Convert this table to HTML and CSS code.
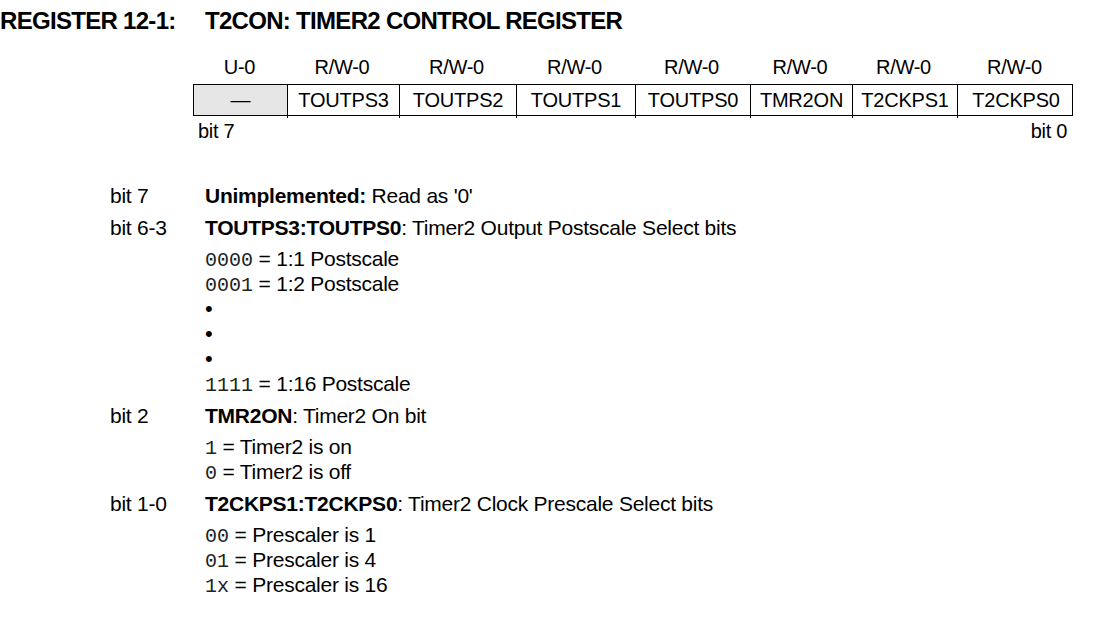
FILE: index.html
```html
<!DOCTYPE html>
<html>
<head>
<meta charset="utf-8">
<link rel="stylesheet" href="styles.css">
</head>
<body>
<div class="page">
  <h1 class="title"><span class="reg-num">REGISTER 12-1:</span><span class="reg-name">T2CON: TIMER2 CONTROL REGISTER</span></h1>

  <div class="register">
    <div class="reg-grid access">
      <div>U-0</div><div>R/W-0</div><div>R/W-0</div><div>R/W-0</div><div>R/W-0</div><div>R/W-0</div><div>R/W-0</div><div>R/W-0</div>
    </div>
    <div class="reg-grid bits">
      <div class="cell unimpl">—</div>
      <div class="cell">TOUTPS3</div>
      <div class="cell">TOUTPS2</div>
      <div class="cell">TOUTPS1</div>
      <div class="cell">TOUTPS0</div>
      <div class="cell">TMR2ON</div>
      <div class="cell">T2CKPS1</div>
      <div class="cell">T2CKPS0</div>
    </div>
    <div class="bitnums"><span>bit 7</span><span>bit 0</span></div>
  </div>

  <div class="desc">
    <div class="entry">
      <div class="label">bit 7</div>
      <div class="body">
        <div class="line"><b>Unimplemented:</b> Read as '0'</div>
      </div>
    </div>
    <div class="entry">
      <div class="label">bit 6-3</div>
      <div class="body">
        <div class="line"><b>TOUTPS3:TOUTPS0</b>: Timer2 Output Postscale Select bits</div>
        <div class="subs">
          <div class="line"><code>0000</code> = 1:1 Postscale</div>
          <div class="line"><code>0001</code> = 1:2 Postscale</div>
          <div class="line bullet">•</div>
          <div class="line bullet">•</div>
          <div class="line bullet">•</div>
          <div class="line"><code>1111</code> = 1:16 Postscale</div>
        </div>
      </div>
    </div>
    <div class="entry">
      <div class="label">bit 2</div>
      <div class="body">
        <div class="line"><b>TMR2ON</b>: Timer2 On bit</div>
        <div class="subs">
          <div class="line"><code>1</code> = Timer2 is on</div>
          <div class="line"><code>0</code> = Timer2 is off</div>
        </div>
      </div>
    </div>
    <div class="entry">
      <div class="label">bit 1-0</div>
      <div class="body">
        <div class="line"><b>T2CKPS1:T2CKPS0</b>: Timer2 Clock Prescale Select bits</div>
        <div class="subs">
          <div class="line"><code>00</code> = Prescaler is 1</div>
          <div class="line"><code>01</code> = Prescaler is 4</div>
          <div class="line"><code>1x</code> = Prescaler is 16</div>
        </div>
      </div>
    </div>
  </div>
</div>
</body>
</html>
```
FILE: styles.css
```css
html, body {
  margin: 0;
  padding: 0;
  background: #ffffff;
}

body {
  font-family: "Liberation Sans", Arial, sans-serif;
  color: #000;
}

.page {
  width: 1104px;
}

.title {
  display: flex;
  margin: 7px 0 0 0;
  font-size: 24px;
  line-height: 28px;
  font-weight: bold;
  letter-spacing: -0.7px;
}

.reg-num {
  width: 205px;
  flex: none;
}

.register {
  margin-left: 193px;
  width: 880px;
}

.reg-grid {
  display: grid;
  grid-template-columns: 93px 112px 117px 119px 115px 102px 105px 117px;
}

.access {
  margin-top: 20px;
  font-size: 20px;
  line-height: 24px;
  text-align: center;
  letter-spacing: -0.3px;
}

.bits {
  margin-top: 5px;
  border: 1px solid #000;
  font-size: 20px;
  letter-spacing: -0.2px;
}

.cell {
  position: relative;
  height: 30px;
  line-height: 30px;
  text-align: center;
  border-left: 1px solid #000;
}

.cell:first-child {
  border-left: none;
}

.cell:not(:first-child)::after {
  content: "";
  position: absolute;
  left: -1px;
  bottom: -3px;
  width: 1px;
  height: 2px;
  background: #000;
}

.unimpl {
  background: #e6e6e6;
}

.bitnums {
  display: flex;
  justify-content: space-between;
  margin-top: 3px;
  padding: 0 6px 0 5px;
  font-size: 20px;
  line-height: 24px;
  letter-spacing: -0.3px;
}

.desc {
  margin-top: 40px;
  padding-left: 110px;
  font-size: 21px;
  letter-spacing: -0.25px;
}

.entry {
  display: flex;
  margin-bottom: 7px;
}

.label {
  width: 95px;
  flex: none;
  height: 25px;
  line-height: 25px;
}

.body {
  flex: 1;
}

.line {
  height: 25px;
  line-height: 25px;
  white-space: nowrap;
}

.subs {
  margin-top: 6px;
}

.bullet {
  font-size: 22px;
}

code {
  font-family: "Liberation Mono", "Courier New", monospace;
  font-size: 20px;
  line-height: 1;
  letter-spacing: 0;
  color: #222;
}
```
